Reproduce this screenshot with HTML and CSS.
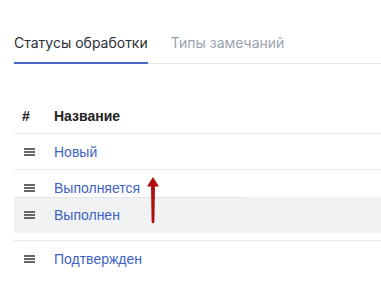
FILE: index.html
```html
<!DOCTYPE html>
<html lang="ru">
<head>
  <meta charset="UTF-8" />
  <title>Статусы обработки</title>
  <link rel="stylesheet" href="styles.css">
</head>
<body>
  <div class="page">
    <div class="tabs">
      <div class="tab active">Статусы обработки</div>
      <div class="tab">Типы замечаний</div>
    </div>

    <div class="table">
      <div class="row head">
        <div class="cell num">#</div>
        <div class="cell name">Название</div>
      </div>
      <div class="row">
        <div class="cell num"><span class="handle"></span></div>
        <div class="cell name"><a href="#">Новый</a></div>
      </div>
      <div class="row">
        <div class="cell num"><span class="handle"></span></div>
        <div class="cell name"><a href="#">Выполняется</a></div>
      </div>
      <div class="row placeholder"></div>
      <div class="row last">
        <div class="cell num"><span class="handle"></span></div>
        <div class="cell name"><a href="#">Подтвержден</a></div>
      </div>

      <!-- row being dragged -->
      <div class="row dragging">
        <div class="cell num"><span class="handle"></span></div>
        <div class="cell name"><a href="#">Выполнен</a></div>
      </div>

      <svg class="arrow" width="14" height="48" viewBox="0 0 14 48">
        <path d="M7 0 L13 9.5 L9 9.5 L8.4 45 Q7 47.8 5.6 45 L5 9.5 L1 9.5 Z" fill="#b00f0f"/>
      </svg>
    </div>
  </div>
</body>
</html>
```

FILE: styles.css
```css
body {
  margin: 0;
  background: #fff;
  font-family: "Liberation Sans", Arial, sans-serif;
  font-size: 14px;
  color: #222;
}
.page {
  padding-left: 14px;
}
.tabs {
  display: flex;
  gap: 23px;
  border-bottom: 1px solid #e6e8ec;
}
.tab {
  font-family: Inter, "Liberation Sans", sans-serif;
  font-size: 14px;
  line-height: 20px;
  padding: 33px 0 9px;
  color: #9aa3b2;
  border-bottom: 2px solid transparent;
  margin-bottom: -1px;
}
.tab.active {
  color: #2b2f36;
  border-bottom-color: #4a68c4;
}

.table {
  position: relative;
  margin-top: 34px;
}
.row {
  display: flex;
  align-items: center;
  height: 35px;
  border-bottom: 1px solid #e8e9ec;
}
.row.head {
  font-weight: bold;
  color: #222;
}
.row.placeholder {
  height: 34px;
}
.row.last {
  border-bottom: none;
}
.cell.num {
  width: 32px;
  padding-left: 8px;
}
.cell.name a {
  color: #3e63c4;
  text-decoration: none;
}
.handle {
  display: block;
  width: 11px;
  height: 2px;
  margin-left: 2px;
  background: #666;
  box-shadow: 0 -3px 0 #666, 0 3px 0 #666;
}

.row.dragging {
  position: absolute;
  left: 0;
  top: 99px;
  width: 100%;
  height: 36px;
  background: #f1f2f4;
  border-bottom: none;
}
.row.dragging::before {
  content: "";
  position: absolute;
  left: 0;
  top: 0;
  width: 232px;
  height: 1px;
  background: #e3e4e7;
}
.arrow {
  position: absolute;
  left: 132px;
  top: 79px;
}
```
